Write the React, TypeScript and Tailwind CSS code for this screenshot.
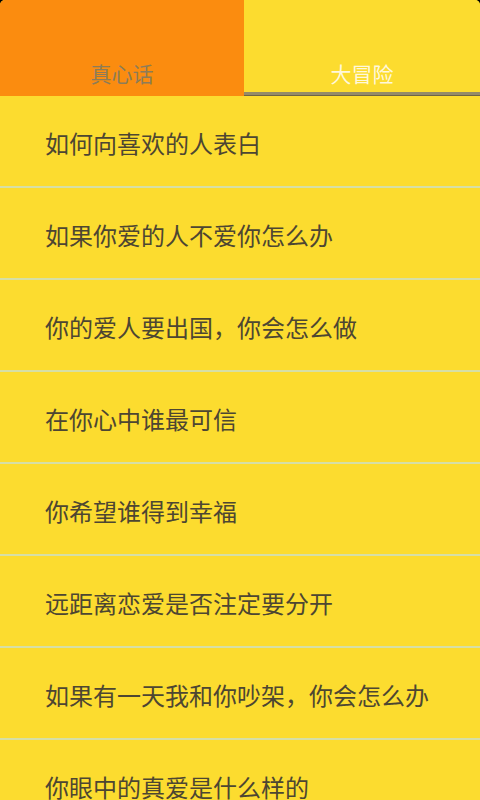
import { useState } from "react";

const questions = [
  "如何向喜欢的人表白",
  "如果你爱的人不爱你怎么办",
  "你的爱人要出国，你会怎么做",
  "在你心中谁最可信",
  "你希望谁得到幸福",
  "远距离恋爱是否注定要分开",
  "如果有一天我和你吵架，你会怎么办",
  "你眼中的真爱是什么样的",
];

const App = () => {
  const [tab, setTab] = useState(1);

  return (
    <div
      className="h-[800px] w-[480px] overflow-hidden bg-black"
      style={{ fontFamily: '"Noto Sans CJK SC", "Noto Sans", sans-serif' }}
    >
      <div className="flex h-full flex-col overflow-hidden rounded-t-[5px] bg-[#fcdc2f]">
        {/* tabs */}
        <div className="flex h-[96px] shrink-0">
          <button
            onClick={() => setTab(0)}
            className="flex w-[244px] flex-col justify-end bg-[#fb8c0f]"
          >
            <span className="pb-[5px] text-[21px] leading-[28px] text-[#8c7c58]">真心话</span>
            <span className="h-1" />
          </button>
          <button onClick={() => setTab(1)} className="flex flex-1 flex-col justify-end bg-[#fcdc2f]">
            <span className="pb-[5px] text-[21px] leading-[28px] text-[#fff8dc]">大冒险</span>
            <span className={tab === 1 ? "h-1 border-b border-[#6e6446] bg-[#958b68]" : "h-1"} />
          </button>
        </div>

        {/* list */}
        <ul className="flex-1">
          {questions.map((q) => (
            <li
              key={q}
              className="flex h-[92px] items-center border-b-2 border-[#d6dfa6] pl-[45px] pt-[4px] text-[24px] text-[#4d4632]"
            >
              {q}
            </li>
          ))}
        </ul>
      </div>
    </div>
  );
};

export default App;
